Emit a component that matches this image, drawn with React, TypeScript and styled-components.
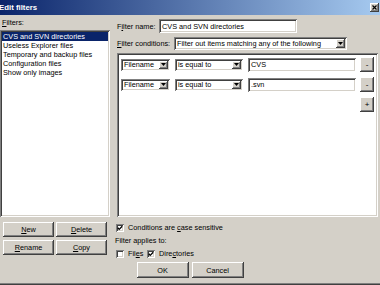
import React from 'react';
import styled, { createGlobalStyle } from 'styled-components';

const sunken = 'inset 1px 1px 0 #808080, inset -1px -1px 0 #ffffff, inset 2px 2px 0 #404040, inset -2px -2px 0 #d4d0c8';
const raised = 'inset -1px -1px 0 #404040, inset 1px 1px 0 #ffffff, inset -2px -2px 0 #808080, inset 2px 2px 0 #d4d0c8';

const Global = createGlobalStyle`
  html, body { margin: 0; padding: 0; background: #d4d0c8; }
  body { font-family: "Liberation Sans", Arial, sans-serif; font-size: 7.3px; color: #000; }
  #root { width: 380px; height: 285px; }
`;

const Window = styled.div`
  width: 380px;
  height: 285px;
  box-sizing: border-box;
  background: #d4d0c8;
  overflow: hidden;
  display: flex;
  flex-direction: column;
  box-shadow: inset 0 -1px 0 #404040, inset 0 -2px 0 #808080;
`;

const TitleBar = styled.div`
  height: 15px;
  flex: none;
  display: flex;
  align-items: center;
  justify-content: space-between;
  background: linear-gradient(to right, #0a246a, #a6caf0);
  color: #fff;
  font-weight: bold;
  font-size: 7.8px;
`;

const TitleText = styled.span`
  margin-left: -1px;
`;

const CloseBtn = styled.span`
  width: 9px;
  height: 9px;
  margin-right: 1px;
  background: #d4d0c8;
  box-shadow: ${raised};
  display: flex;
  align-items: center;
  justify-content: center;
`;

const Main = styled.div`
  height: 202px;
  flex: none;
  display: flex;
  column-gap: 7px;
  padding-right: 2px;
`;

const LeftPane = styled.div`
  width: 110px;
  flex: none;
  display: flex;
  flex-direction: column;
`;

const PaneLabel = styled.div`
  height: 15px;
  line-height: 15px;
  padding-left: 2px;
  flex: none;
`;

const ListBox = styled.div`
  flex: 1;
  background: #fff;
  box-shadow: ${sunken};
  padding: 2px;
  box-sizing: border-box;
`;

const ListItem = styled.div<{ $selected?: boolean }>`
  height: 9px;
  line-height: 9px;
  padding-left: 1px;
  white-space: nowrap;
  background: ${p => (p.$selected ? '#0a246a' : 'transparent')};
  color: ${p => (p.$selected ? '#fff' : '#000')};
`;

const RightPane = styled.div`
  flex: 1;
  display: flex;
  flex-direction: column;
  padding-top: 4px;
`;

const FormRow = styled.div<{ $gap: number }>`
  display: flex;
  align-items: center;
  margin-bottom: ${p => p.$gap}px;
`;

const RowLabel = styled.span<{ $w: number }>`
  width: ${p => p.$w}px;
  flex: none;
  white-space: nowrap;
`;

const TextField = styled.div<{ $w: number; $h: number }>`
  width: ${p => p.$w}px;
  height: ${p => p.$h}px;
  flex: none;
  box-sizing: border-box;
  background: #fff;
  box-shadow: ${sunken};
  display: flex;
  align-items: center;
  padding: 0 3px;
  white-space: nowrap;
  overflow: hidden;
`;

const SelectBox = styled.div<{ $w: number; $h: number }>`
  width: ${p => p.$w}px;
  height: ${p => p.$h}px;
  flex: none;
  box-sizing: border-box;
  background: #fff;
  box-shadow: ${sunken};
  display: flex;
  align-items: stretch;
  padding: 2px;
`;

const SelectText = styled.span`
  flex: 1;
  display: flex;
  align-items: center;
  padding-left: 1px;
  white-space: nowrap;
  overflow: hidden;
`;

const ArrowBtn = styled.span`
  width: 9px;
  flex: none;
  background: #d4d0c8;
  box-shadow: ${raised};
  display: flex;
  align-items: center;
  justify-content: center;
`;

const ConditionsPanel = styled.div`
  flex: 1;
  background: #fff;
  box-shadow: ${sunken};
  padding: 4px;
  box-sizing: border-box;
  display: flex;
  flex-direction: column;
  row-gap: 5px;
`;

const CondRow = styled.div`
  height: 15px;
  display: flex;
  align-items: center;
  column-gap: 5px;
`;

const SmallBtn = styled.span`
  width: 14px;
  height: 15px;
  margin-left: -1px;
  flex: none;
  box-sizing: border-box;
  background: #d4d0c8;
  box-shadow: ${raised};
  display: flex;
  align-items: center;
  justify-content: center;
  font-size: 8px;
  line-height: 1;
`;

const PlusRow = styled.div`
  height: 14px;
  display: flex;
  justify-content: flex-end;
`;

const Lower = styled.div`
  height: 41px;
  flex: none;
  display: flex;
  column-gap: 9px;
`;

const ButtonGrid = styled.div`
  width: 107px;
  flex: none;
  padding: 5px 0 0 3px;
  box-sizing: border-box;
  display: grid;
  grid-template-columns: 51px 51px;
  grid-auto-rows: 15px;
  gap: 3px 2px;
  align-content: start;
`;

const Button = styled.span<{ $w?: number; $h?: number }>`
  ${p => (p.$w ? `width: ${p.$w}px;` : '')}
  ${p => (p.$h ? `height: ${p.$h}px;` : '')}
  box-sizing: border-box;
  background: #d4d0c8;
  box-shadow: ${raised};
  display: flex;
  align-items: center;
  justify-content: center;
  white-space: nowrap;
`;

const Options = styled.div`
  flex: 1;
  padding-top: 6px;
  display: flex;
  flex-direction: column;
`;

const CheckRow = styled.div<{ $top?: number }>`
  height: 9px;
  margin-top: ${p => p.$top ?? 0}px;
  display: flex;
  align-items: center;
`;

const CheckItem = styled.span<{ $w?: number }>`
  display: flex;
  align-items: center;
  ${p => (p.$w ? `width: ${p.$w}px;` : '')}
  flex: none;
  white-space: nowrap;
`;

const CheckBox = styled.span`
  width: 8px;
  height: 8px;
  flex: none;
  box-sizing: border-box;
  background: #fff;
  box-shadow: ${sunken};
  display: flex;
  align-items: center;
  justify-content: center;
  margin-right: 4px;
`;

const OptionLabel = styled.div`
  height: 9px;
  line-height: 9px;
  margin-top: 4px;
  margin-left: -1px;
`;

const Footer = styled.div`
  display: flex;
  justify-content: center;
  column-gap: 3px;
  margin-top: 4px;
`;

const Arrow = () => (
  <svg width="5" height="3" viewBox="0 0 5 3">
    <polygon points="0,0 5,0 2.5,3" fill="#000" />
  </svg>
);

const Check = () => (
  <svg width="6" height="6" viewBox="0 0 6 6">
    <polyline points="0.8,2.8 2.2,4.4 5.2,1.2" fill="none" stroke="#000" strokeWidth="1.3" />
  </svg>
);

const Select: React.FC<{ w: number; h: number; children: React.ReactNode }> = ({ w, h, children }) => (
  <SelectBox $w={w} $h={h}>
    <SelectText>{children}</SelectText>
    <ArrowBtn>
      <Arrow />
    </ArrowBtn>
  </SelectBox>
);

const conditions = [
  { field: 'Filename', op: 'is equal to', value: 'CVS' },
  { field: 'Filename', op: 'is equal to', value: '.svn' },
];

const filters = [
  'CVS and SVN directories',
  'Useless Explorer files',
  'Temporary and backup files',
  'Configuration files',
  'Show only images',
];

export default function App() {
  return (
    <>
      <Global />
      <Window>
        <TitleBar>
          <TitleText>Edit filters</TitleText>
          <CloseBtn>
            <svg width="5" height="5" viewBox="0 0 5 5">
              <path d="M0.5 0.5 L4.5 4.5 M4.5 0.5 L0.5 4.5" stroke="#000" strokeWidth="1.2" />
            </svg>
          </CloseBtn>
        </TitleBar>
        <Main>
          <LeftPane>
            <PaneLabel>
              <u>F</u>ilters:
            </PaneLabel>
            <ListBox>
              {filters.map((f, i) => (
                <ListItem key={f} $selected={i === 0}>
                  {f}
                </ListItem>
              ))}
            </ListBox>
          </LeftPane>
          <RightPane>
            <FormRow $gap={4}>
              <RowLabel $w={42}>
                F<u>i</u>lter name:
              </RowLabel>
              <TextField $w={138} $h={14}>CVS and SVN directories</TextField>
            </FormRow>
            <FormRow $gap={3}>
              <RowLabel $w={57}>
                <u>F</u>ilter conditions:
              </RowLabel>
              <Select w={173} h={13}>Filter out items matching any of the following</Select>
            </FormRow>
            <ConditionsPanel>
              {conditions.map((c, i) => (
                <CondRow key={i}>
                  <Select w={49} h={12}>{c.field}</Select>
                  <Select w={68} h={12}>{c.op}</Select>
                  <TextField $w={108} $h={14}>{c.value}</TextField>
                  <SmallBtn>-</SmallBtn>
                </CondRow>
              ))}
              <PlusRow>
                <SmallBtn>+</SmallBtn>
              </PlusRow>
            </ConditionsPanel>
          </RightPane>
        </Main>
        <Lower>
          <ButtonGrid>
            <Button>
              <u>N</u>ew
            </Button>
            <Button>
              <u>D</u>elete
            </Button>
            <Button>
              <u>R</u>ename
            </Button>
            <Button>
              <u>C</u>opy
            </Button>
          </ButtonGrid>
          <Options>
            <CheckRow>
              <CheckItem>
                <CheckBox>
                  <Check />
                </CheckBox>
                <span>
                  Conditions are <u>c</u>ase sensitive
                </span>
              </CheckItem>
            </CheckRow>
            <OptionLabel>Filter applies to:</OptionLabel>
            <CheckRow $top={4}>
              <CheckItem $w={31}>
                <CheckBox />
                <span>
                  Fil<u>e</u>s
                </span>
              </CheckItem>
              <CheckItem>
                <CheckBox>
                  <Check />
                </CheckBox>
                <span>
                  Dire<u>c</u>tories
                </span>
              </CheckItem>
            </CheckRow>
          </Options>
        </Lower>
        <Footer>
          <Button $w={52} $h={16}>OK</Button>
          <Button $w={52} $h={16}>Cancel</Button>
        </Footer>
      </Window>
    </>
  );
}
